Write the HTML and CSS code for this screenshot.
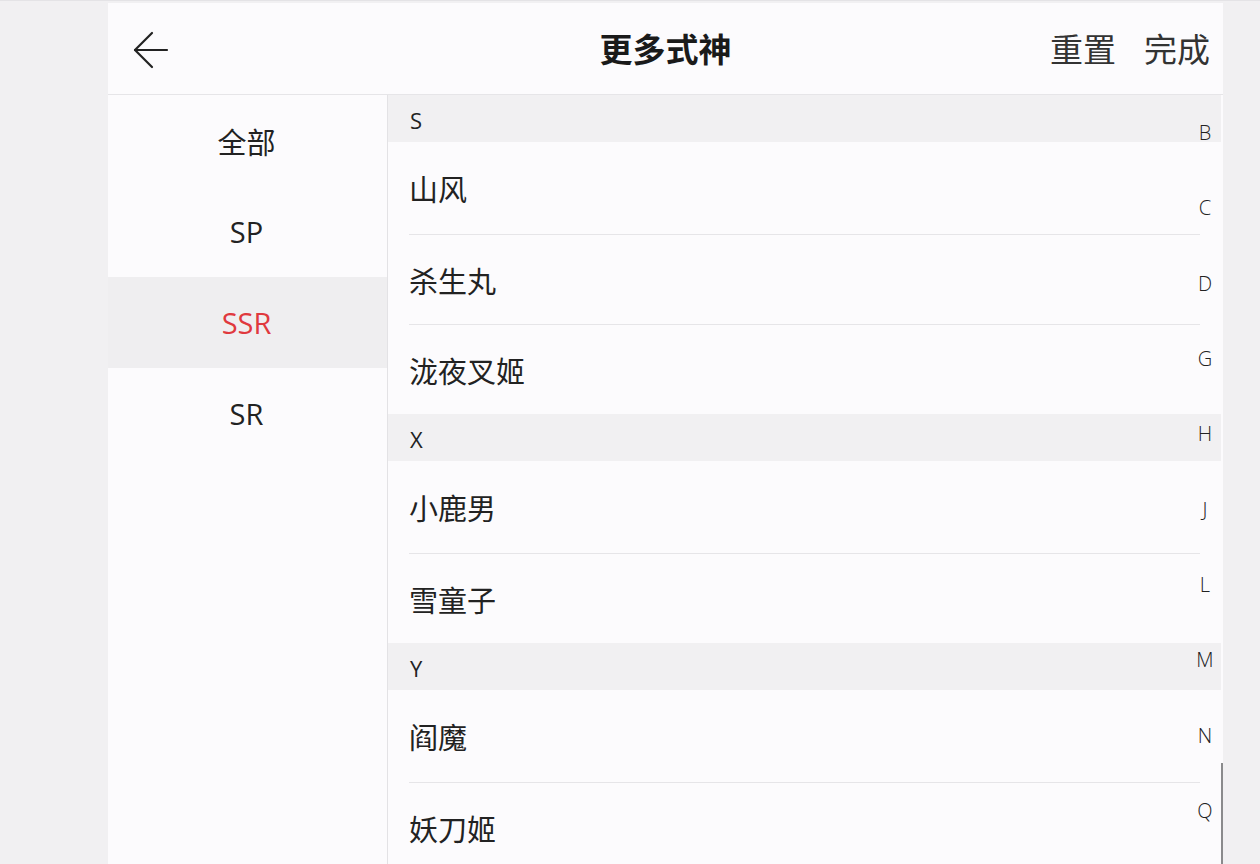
FILE: index.html
```html
<!DOCTYPE html>
<html lang="zh-CN">
<head>
<meta charset="utf-8">
<title>更多式神</title>
<link rel="stylesheet" href="styles.css">
</head>
<body>
<div class="app">
  <header class="topbar">
    <div class="back">
      <svg width="36" height="38" viewBox="0 0 36 38" fill="none" stroke="#222" stroke-width="2.2" stroke-linecap="round" stroke-linejoin="round">
        <path d="M34 19H2"/>
        <path d="M19 2L2 19L19 36"/>
      </svg>
    </div>
    <h1 class="title">更多式神</h1>
    <div class="actions">
      <span class="action">重置</span>
      <span class="action">完成</span>
    </div>
  </header>
  <div class="body">
    <nav class="sidebar">
      <div class="side-item">全部</div>
      <div class="side-item">SP</div>
      <div class="side-item active">SSR</div>
      <div class="side-item">SR</div>
    </nav>
    <main class="list">
      <section class="group">
        <div class="group-head">S</div>
        <div class="row">山风</div>
        <div class="row">杀生丸</div>
        <div class="row">泷夜叉姬</div>
      </section>
      <section class="group">
        <div class="group-head">X</div>
        <div class="row">小鹿男</div>
        <div class="row">雪童子</div>
      </section>
      <section class="group">
        <div class="group-head">Y</div>
        <div class="row">阎魔</div>
        <div class="row">妖刀姬</div>
      </section>
      <ul class="index">
        <li>B</li><li>C</li><li>D</li><li>G</li><li>H</li><li>J</li><li>L</li><li>M</li><li>N</li><li>Q</li>
      </ul>
      <div class="scrollbar"></div>
    </main>
  </div>
</div>
</body>
</html>
```
FILE: styles.css
```css
* { box-sizing: border-box; }
html, body {
  margin: 0;
  height: 864px;
  overflow: hidden;
}
body {
  background: #f1f0f2;
  padding-top: 2px;
  border-top: 1px solid #e4e3e6;
  font-family: "Open Sans", "Noto Sans CJK SC", sans-serif;
  color: #222;
}
.app {
  margin-left: 108px;
  width: 1115px;
  height: 880px;
  background: #fcfbfd;
  display: flex;
  flex-direction: column;
}
.topbar {
  height: 92px;
  flex: none;
  display: grid;
  grid-template-columns: 1fr auto 1fr;
  align-items: center;
  border-bottom: 1px solid #e6e5e8;
  padding: 0 13px;
}
.back {
  display: flex;
  align-items: center;
  margin-top: 2px;
  margin-left: 12px;
}
.title {
  margin: 0;
  text-align: center;
  font-family: "Noto Sans CJK SC", sans-serif;
  font-weight: 700;
  font-size: 33px;
  color: #1a1a1a;
  margin-top: -2px;
}
.actions {
  display: flex;
  justify-content: flex-end;
  gap: 28px;
  margin-top: -2px;
}
.action {
  font-family: "Noto Sans CJK SC", sans-serif;
  font-size: 33px;
  font-weight: 400;
  color: #333;
}
.body {
  flex: 1;
  display: flex;
  min-height: 0;
}
.sidebar {
  width: 280px;
  flex: none;
  border-right: 1px solid #e3e2e5;
  background: #fcfbfd;
}
.side-item {
  height: 91px;
  display: flex;
  align-items: center;
  justify-content: center;
  font-family: "Open Sans", "Noto Sans CJK SC", sans-serif;
  font-size: 29px;
  color: #222;
  padding-right: 2px;
}
.side-item.active {
  background: #efeef0;
  color: #e0393e;
}
.list {
  flex: 1;
  position: relative;
  background: #fcfbfd;
}
.group-head {
  height: 47px;
  background: #f1f0f2;
  margin-right: 2px;
  display: flex;
  align-items: center;
  padding-left: 22px;
  font-size: 22px;
  color: #222;
  padding-top: 2px;
}
.row {
  height: 92px;
  display: flex;
  align-items: center;
  margin-left: 21px;
  margin-right: 23px;
  font-family: "Noto Sans CJK SC", sans-serif;
  font-size: 29px;
  color: #222;
}
.row + .row {
  border-top: 1px solid #e6e5e8;
  height: 90px;
}
.index {
  position: absolute;
  top: 0;
  right: 0;
  width: 36px;
  margin: 0;
  padding: 0;
  list-style: none;
}
.index li {
  height: 75.3px;
  display: flex;
  align-items: center;
  justify-content: center;
  font-family: "Open Sans", sans-serif;
  font-weight: 300;
  font-size: 20px;
  color: #222;
}
.scrollbar {
  position: absolute;
  right: 0;
  top: 668px;
  width: 2px;
  height: 220px;
  background: #8a8a8c;
}
```
